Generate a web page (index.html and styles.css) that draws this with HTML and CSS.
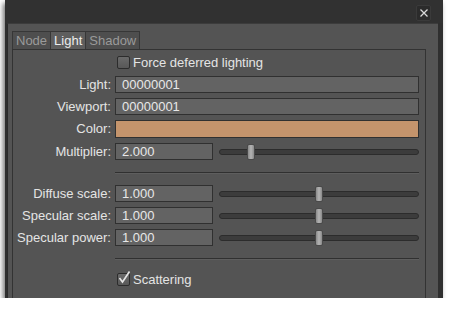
FILE: index.html
```html
<!DOCTYPE html>
<html>
<head>
    <title>Light Properties</title>
    <link rel="stylesheet" href="styles.css">
</head>
<body>
    <div class="window">
        <div class="titlebar">
            <div class="close-btn">
                <svg width="10" height="10" viewBox="0 0 10 10"><path d="M1.5 1.5 L8.5 8.5 M8.5 1.5 L1.5 8.5" stroke="#d8d8d8" stroke-width="1.3"/></svg>
            </div>
        </div>
        <div class="content">
            <div class="tabs">
                <div class="tab">Node</div>
                <div class="tab active">Light</div>
                <div class="tab">Shadow</div>
            </div>
            <div class="pane">
                <div class="form">
                    <div></div>
                    <label class="check-row"><span class="checkbox"></span>Force deferred lighting</label>

                    <label class="field-label">Light:</label>
                    <div class="input">00000001</div>

                    <label class="field-label">Viewport:</label>
                    <div class="input">00000001</div>

                    <label class="field-label">Color:</label>
                    <div class="color-swatch"></div>

                    <label class="field-label">Multiplier:</label>
                    <div class="slider-row">
                        <div class="input short">2.000</div>
                        <div class="slider"><span class="handle" style="left: 13.5%"></span></div>
                    </div>

                    <div></div>
                    <div class="separator"></div>

                    <label class="field-label">Diffuse scale:</label>
                    <div class="slider-row">
                        <div class="input short">1.000</div>
                        <div class="slider"><span class="handle" style="left: 48%"></span></div>
                    </div>

                    <label class="field-label">Specular scale:</label>
                    <div class="slider-row">
                        <div class="input short">1.000</div>
                        <div class="slider"><span class="handle" style="left: 48%"></span></div>
                    </div>

                    <label class="field-label">Specular power:</label>
                    <div class="slider-row">
                        <div class="input short">1.000</div>
                        <div class="slider"><span class="handle" style="left: 48%"></span></div>
                    </div>

                    <div></div>
                    <div class="separator"></div>

                    <div></div>
                    <label class="check-row"><span class="checkbox checked">
                        <svg width="14" height="15" viewBox="0 0 14 15"><path d="M2.5 8 L5.5 12 L12.5 1.5" fill="none" stroke="#e6e6e6" stroke-width="1.6"/></svg>
                    </span>Scattering</label>
                </div>
            </div>
        </div>
    </div>
</body>
</html>
```

FILE: styles.css
```css
body {
    margin: 0;
    background-color: #fff;
    font-family: "Liberation Sans", Arial, sans-serif;
    font-size: 13px;
    color: #e4e4e4;
}

.window {
    width: 438px;
    height: 298px;
    margin-left: 5px;
    background-color: #2f2f2f;
    box-shadow: -2px 3px 5px rgba(0, 0, 0, 0.55);
    display: flex;
    flex-direction: column;
    overflow: hidden;
}

.titlebar {
    height: 23px;
    flex: none;
    display: flex;
    align-items: center;
    justify-content: flex-end;
    padding-right: 12px;
    background-color: #313131;
}

.close-btn {
    width: 13px;
    height: 14px;
    display: flex;
    align-items: center;
    justify-content: center;
    background-color: #2b2b2b;
    border: 1px solid #3a3a3a;
    border-radius: 2px;
    margin-top: 2px;
}

.content {
    flex: 1;
    margin: 0 5px 0 2px;
    background-color: #545454;
    border-left: 1px solid #2b2b2b;
    border-top: 1px solid #3c3c3c;
    padding: 7px 12px 0 4px;
    display: flex;
    flex-direction: column;
}

.tabs {
    display: flex;
    height: 18px;
}

.tab {
    padding: 0 3px;
    line-height: 17px;
    color: #9a9a9a;
    background-color: #4e4e4e;
    border: 1px solid #373737;
    border-bottom: none;
    margin-right: -1px;
}

.tab.active {
    color: #ececec;
    background-color: #5e5e5e;
}

.pane {
    flex: 1;
    border: 1px solid #333;
    border-bottom: none;
    padding: 4px 6px 0 0;
}

.form {
    display: grid;
    grid-template-columns: 98px 1fr;
    column-gap: 4px;
    row-gap: 5px;
}

.field-label {
    text-align: right;
    line-height: 17px;
    white-space: nowrap;
}

.check-row {
    display: flex;
    align-items: center;
    height: 17px;
    gap: 3px;
}

.checkbox {
    width: 11px;
    height: 11px;
    margin-left: 2px;
    border: 1px solid #2c2c2c;
    border-radius: 2px;
    background: linear-gradient(#6a6a6a, #585858);
    position: relative;
}

.checkbox svg {
    position: absolute;
    left: -1px;
    top: -4px;
}

.input {
    height: 15px;
    line-height: 15px;
    padding-left: 6px;
    border: 1px solid #303030;
    background-color: #636363;
    color: #e8e8e8;
}

.input.short {
    width: 90px;
    flex: none;
}

.color-swatch {
    height: 16px;
    border: 1px solid #303030;
    background-color: #c4946c;
}

.slider-row {
    display: flex;
    align-items: center;
    gap: 6px;
}

.slider {
    flex: 1;
    height: 4px;
    border: 1px solid #2c2c2c;
    border-radius: 3px;
    background-color: #3c3c3c;
    position: relative;
}

.handle {
    position: absolute;
    top: -6px;
    width: 6px;
    height: 14px;
    border-radius: 2px;
    border: 1px solid #4a4a4a;
    background: linear-gradient(to right, #8a8a8a, #b4b4b4 50%, #8a8a8a);
}

.separator {
    height: 15px;
    display: flex;
    align-items: center;
}

.separator::before {
    content: "";
    flex: 1;
    height: 1px;
    background-color: #303030;
    border-bottom: 1px solid #5e5e5e;
}
```
